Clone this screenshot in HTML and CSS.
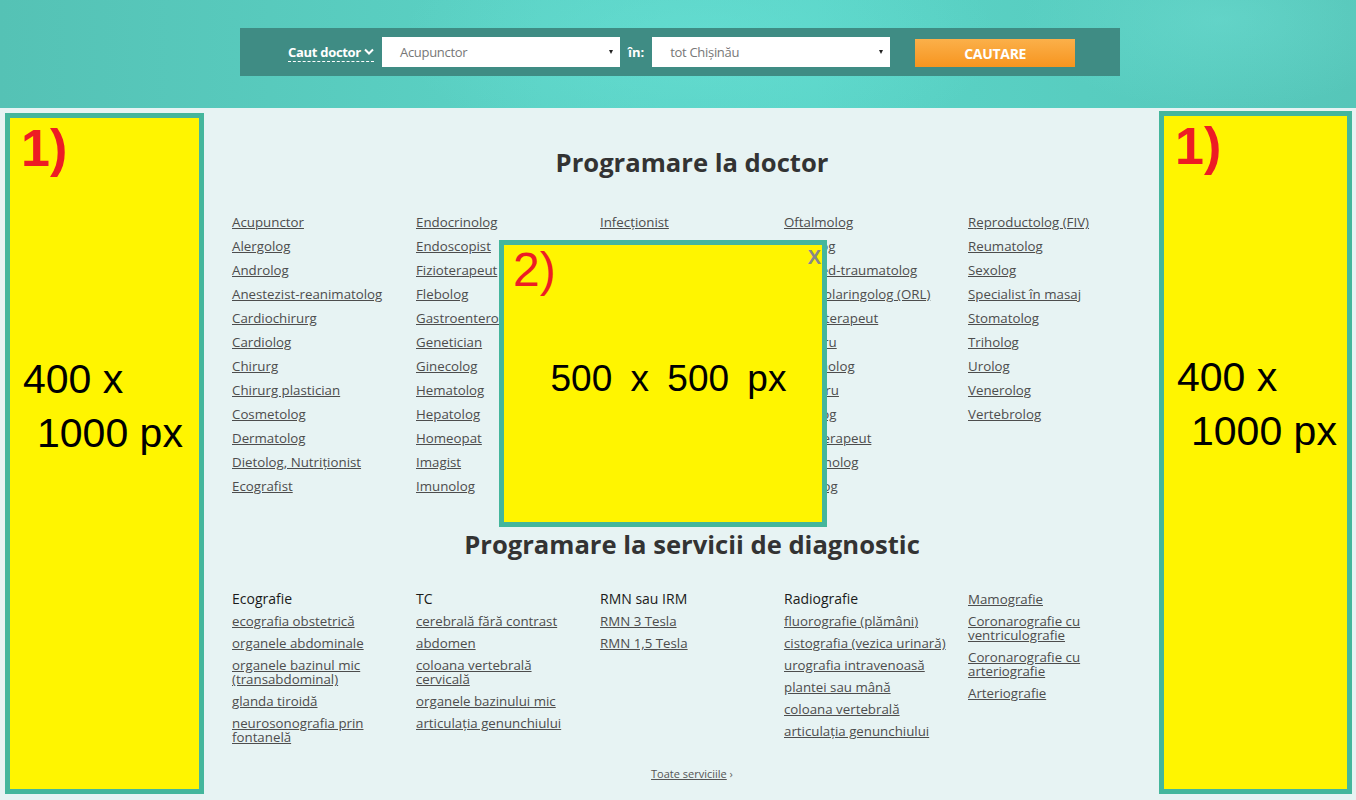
FILE: index.html
```html
<!DOCTYPE html>
<html lang="ro">
<head>
    <meta charset="UTF-8">
    <meta name="viewport" content="width=device-width, initial-scale=1.0">
    <title>Programare la doctor</title>
    <link rel="stylesheet" href="styles.css">
</head>
<body>
<header class="top">
    <form class="search">
        <span class="search-label">Caut doctor
            <svg class="chevron" width="10" height="8" viewBox="0 0 10 8"><path d="M1 1.5 L5 5.5 L9 1.5" fill="none" stroke="#fff" stroke-width="2"/></svg>
        </span>
        <div class="select">Acupunctor<span class="caret"></span></div>
        <span class="in-label">în:</span>
        <div class="select">tot Chișinău<span class="caret"></span></div>
        <button type="button" class="search-btn">CAUTARE</button>
    </form>
</header>

<div class="page">
    <aside class="banner banner-left">
        <div class="banner-num">1)</div>
        <div class="banner-size">400 x<br><span class="indent">1000 px</span></div>
    </aside>

    <main class="content">
        <h2 class="section-title">Programare la doctor</h2>
        <div class="doctors">
            <ul>
                <li><a href="#">Acupunctor</a></li>
                <li><a href="#">Alergolog</a></li>
                <li><a href="#">Androlog</a></li>
                <li><a href="#">Anestezist-reanimatolog</a></li>
                <li><a href="#">Cardiochirurg</a></li>
                <li><a href="#">Cardiolog</a></li>
                <li><a href="#">Chirurg</a></li>
                <li><a href="#">Chirurg plastician</a></li>
                <li><a href="#">Cosmetolog</a></li>
                <li><a href="#">Dermatolog</a></li>
                <li><a href="#">Dietolog, Nutriționist</a></li>
                <li><a href="#">Ecografist</a></li>
            </ul>
            <ul>
                <li><a href="#">Endocrinolog</a></li>
                <li><a href="#">Endoscopist</a></li>
                <li><a href="#">Fizioterapeut</a></li>
                <li><a href="#">Flebolog</a></li>
                <li><a href="#">Gastroenterolog</a></li>
                <li><a href="#">Genetician</a></li>
                <li><a href="#">Ginecolog</a></li>
                <li><a href="#">Hematolog</a></li>
                <li><a href="#">Hepatolog</a></li>
                <li><a href="#">Homeopat</a></li>
                <li><a href="#">Imagist</a></li>
                <li><a href="#">Imunolog</a></li>
            </ul>
            <ul>
                <li><a href="#">Infecționist</a></li>
                <li><a href="#">Kinetoterapeut</a></li>
                <li><a href="#">Logoped</a></li>
                <li><a href="#">Mamolog</a></li>
                <li><a href="#">Medic de familie</a></li>
                <li><a href="#">Nefrolog</a></li>
                <li><a href="#">Neonatolog</a></li>
                <li><a href="#">Neurochirurg</a></li>
                <li><a href="#">Neurolog</a></li>
                <li><a href="#">Neuropediatru</a></li>
                <li><a href="#">Narcolog</a></li>
                <li><a href="#">Obstetrician</a></li>
            </ul>
            <ul>
                <li><a href="#">Oftalmolog</a></li>
                <li><a href="#">Oncolog</a></li>
                <li><a href="#">Ortoped-traumatolog</a></li>
                <li><a href="#">Otorinolaringolog (ORL)</a></li>
                <li><a href="#">Ozonoterapeut</a></li>
                <li><a href="#">Pediatru</a></li>
                <li><a href="#">Pneumolog</a></li>
                <li><a href="#">Psihiatru</a></li>
                <li><a href="#">Psiholog</a></li>
                <li><a href="#">Psihoterapeut</a></li>
                <li><a href="#">Pulmonolog</a></li>
                <li><a href="#">Radiolog</a></li>
            </ul>
            <ul>
                <li><a href="#">Reproductolog (FIV)</a></li>
                <li><a href="#">Reumatolog</a></li>
                <li><a href="#">Sexolog</a></li>
                <li><a href="#">Specialist în masaj</a></li>
                <li><a href="#">Stomatolog</a></li>
                <li><a href="#">Triholog</a></li>
                <li><a href="#">Urolog</a></li>
                <li><a href="#">Venerolog</a></li>
                <li><a href="#">Vertebrolog</a></li>
            </ul>
        </div>

        <h2 class="section-title">Programare la servicii de diagnostic</h2>
        <div class="diagnostic">
            <div class="diag-col">
                <h4>Ecografie</h4>
                <a href="#">ecografia obstetrică</a>
                <a href="#">organele abdominale</a>
                <a href="#">organele bazinul mic (transabdominal)</a>
                <a href="#">glanda tiroidă</a>
                <a href="#">neurosonografia prin fontanelă</a>
            </div>
            <div class="diag-col">
                <h4>TC</h4>
                <a href="#">cerebrală fără contrast</a>
                <a href="#">abdomen</a>
                <a href="#">coloana vertebrală cervicală</a>
                <a href="#">organele bazinului mic</a>
                <a href="#">articulația genunchiului</a>
            </div>
            <div class="diag-col">
                <h4>RMN sau IRM</h4>
                <a href="#">RMN 3 Tesla</a>
                <a href="#">RMN 1,5 Tesla</a>
            </div>
            <div class="diag-col">
                <h4>Radiografie</h4>
                <a href="#">fluorografie (plămâni)</a>
                <a href="#">cistografia (vezica urinară)</a>
                <a href="#">urografia intravenoasă</a>
                <a href="#">plantei sau mână</a>
                <a href="#">coloana vertebrală</a>
                <a href="#">articulația genunchiului</a>
            </div>
            <div class="diag-col diag-col-plain">
                <a href="#">Mamografie</a>
                <a href="#">Coronarografie cu ventriculografie</a>
                <a href="#">Coronarografie cu arteriografie</a>
                <a href="#">Arteriografie</a>
            </div>
        </div>

        <div class="all-link"><a href="#">Toate serviciile</a> ›</div>
    </main>

    <aside class="banner banner-right">
        <div class="banner-num">1)</div>
        <div class="banner-size">400 x<br><span class="indent">1000 px</span></div>
    </aside>

    <div class="popup">
        <span class="popup-close">X</span>
        <div class="popup-num">2)</div>
        <div class="popup-size">500 x 500 px</div>
    </div>
</div>
</body>
</html>
```

FILE: styles.css
```css
body {
    margin: 0;
    font-family: "Open Sans", "Liberation Sans", sans-serif;
    background: #e7f3f3;
    color: #333;
}

/* header */
.top {
    height: 108px;
    box-sizing: border-box;
    padding-top: 28px;
    background:
        radial-gradient(ellipse 300px 120px at 700px 40px, rgba(110, 230, 220, 0.45), transparent),
        radial-gradient(ellipse 200px 90px at 1220px 20px, rgba(120, 230, 220, 0.35), transparent),
        linear-gradient(90deg, #55c2b5 0%, #5bd2c5 40%, #5ad4c7 60%, #56c6b9 100%);
}
.search {
    width: 880px;
    height: 48px;
    margin: 0 0 0 240px;
    box-sizing: border-box;
    padding-left: 48px;
    background: #3f8c84;
    display: flex;
    align-items: center;
}
.search-label {
    color: #fff;
    font-weight: 700;
    font-size: 13px;
    letter-spacing: -0.3px;
    line-height: 16px;
    padding-bottom: 1px;
    border-bottom: 1px dashed #fff;
    display: flex;
    align-items: center;
    gap: 3px;
    margin-top: 2px;
}
.select {
    width: 238px;
    height: 30px;
    box-sizing: border-box;
    margin-left: 8px;
    padding-left: 18px;
    background: #fff;
    color: #777;
    font-size: 13px;
    letter-spacing: -0.3px;
    display: flex;
    align-items: center;
    position: relative;
}
.caret {
    position: absolute;
    right: 7px;
    top: 13px;
    border-left: 2px solid transparent;
    border-right: 2px solid transparent;
    border-top: 4px solid #222;
}
.in-label {
    color: #fff;
    font-weight: 700;
    font-size: 13px;
    margin-left: 8px;
}
.in-label + .select {
    margin-left: 8px;
}
.search-btn {
    width: 160px;
    height: 28px;
    margin: 2px 0 0 25px;
    border: none;
    background: linear-gradient(#fbb04a, #f7951f);
    color: #fff;
    font-family: "Open Sans", sans-serif;
    font-weight: 700;
    font-size: 14px;
    letter-spacing: -0.3px;
    cursor: pointer;
}

/* page */
.page {
    display: flex;
    align-items: flex-start;
    position: relative;
}
.banner {
    box-sizing: border-box;
    border: 5px solid #44b69c;
    background: #fff500;
    font-family: "Liberation Sans", Arial, sans-serif;
    padding-top: 4px;
}
.banner-left {
    width: 199px;
    height: 681px;
    margin: 5px 0 0 5px;
}
.banner-right {
    width: 193px;
    height: 683px;
    margin: 3px 0 0 7px;
}
.banner-num {
    color: #ed1c24;
    font-weight: 700;
    font-size: 52px;
    line-height: 52px;
    padding-left: 11px;
}
.banner-size {
    margin-top: 178px;
    padding-left: 13px;
    font-size: 41px;
    line-height: 54px;
    color: #000;
}
.indent {
    padding-left: 14px;
}

/* content */
.content {
    width: 920px;
    margin-left: 28px;
    padding-top: 39px;
}
.section-title {
    margin: 0;
    text-align: center;
    font-size: 25.6px;
    line-height: 32px;
    font-weight: 700;
    color: #333;
}
.doctors {
    display: grid;
    grid-template-columns: repeat(5, 184px);
    margin: 31px 0 31px;
}
.doctors ul {
    list-style: none;
    margin: 0;
    padding: 0;
}
.doctors li {
    line-height: 24px;
    font-size: 13.3px;
}
a {
    color: #4d4d4d;
    text-decoration: underline;
}
.diagnostic {
    display: grid;
    grid-template-columns: repeat(5, 184px);
    margin-top: 28px;
}
.diag-col {
    display: flex;
    flex-direction: column;
    align-items: flex-start;
    gap: 8px;
    padding-right: 16px;
}
.diag-col h4 {
    margin: 0 0 -3px;
    font-size: 14px;
    line-height: 20px;
    font-weight: 400;
    color: #1a1a1a;
}
.diag-col a {
    font-size: 13.3px;
    line-height: 14px;
}
.diag-col-plain {
    padding-top: 3px;
}
.all-link {
    margin-top: 23px;
    text-align: center;
    font-size: 11px;
    line-height: 14px;
    color: #666;
}
.all-link a {
    color: #555;
}

/* popup */
.popup {
    position: absolute;
    left: 499px;
    top: 132px;
    width: 328px;
    height: 287px;
    box-sizing: border-box;
    border: 5px solid #44b69c;
    background: #fff500;
    font-family: "Liberation Sans", Arial, sans-serif;
}
.popup-close {
    position: absolute;
    top: 2px;
    right: 1px;
    color: #888;
    font-size: 20px;
    font-weight: 700;
    line-height: 20px;
}
.popup-num {
    color: #ed1c24;
    font-size: 48px;
    line-height: 48px;
    padding: 1px 0 0 9px;
}
.popup-size {
    margin-top: 65px;
    padding-left: 11px;
    text-align: center;
    font-size: 37px;
    line-height: 40px;
    word-spacing: 8px;
    color: #000;
}
```
